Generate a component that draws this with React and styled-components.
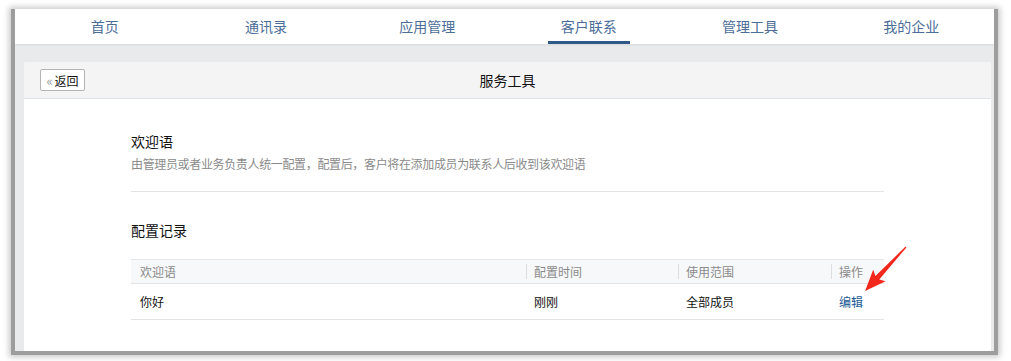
import React from 'react';
import styled, { createGlobalStyle } from 'styled-components';

const GlobalStyle = createGlobalStyle`
  html, body {
    margin: 0;
    padding: 0;
    background: #fff;
  }
  body {
    font-family: "Noto Sans CJK SC", "Noto Sans", sans-serif;
  }
`;

const navItems = ['首页', '通讯录', '应用管理', '客户联系', '管理工具', '我的企业'];

const records = [{ text: '你好', time: '刚刚', scope: '全部成员' }];

export default function App() {
  return (
    <Page>
      <GlobalStyle />
      <Frame>
        <NavBar>
          {navItems.map(item => (
            <NavItem key={item} active={item === '客户联系'}>
              <span>{item}</span>
            </NavItem>
          ))}
        </NavBar>
        <Main>
          <Card>
            <CardHeader>
              <BackButton>
                <span className="arrows">«</span>返回
              </BackButton>
              <CardTitle>服务工具</CardTitle>
            </CardHeader>
            <CardBody>
              <SectionTitle>欢迎语</SectionTitle>
              <Desc>由管理员或者业务负责人统一配置，配置后，客户将在添加成员为联系人后收到该欢迎语</Desc>
              <Divider />
              <SectionTitle gap={28}>配置记录</SectionTitle>
              <Table>
                <HeadRow>
                  <HeadCell>欢迎语</HeadCell>
                  <HeadCell sep>配置时间</HeadCell>
                  <HeadCell sep>使用范围</HeadCell>
                  <HeadCell sep>操作</HeadCell>
                </HeadRow>
                {records.map(r => (
                  <BodyRow key={r.text}>
                    <Cell>{r.text}</Cell>
                    <Cell>{r.time}</Cell>
                    <Cell>{r.scope}</Cell>
                    <Cell>
                      <EditLink>编辑</EditLink>
                    </Cell>
                  </BodyRow>
                ))}
              </Table>
            </CardBody>
          </Card>
        </Main>
      </Frame>
      <Arrow width="90" height="80" viewBox="0 0 90 80">
        <path
          transform="translate(66,17) rotate(133)"
          d="M0,-0.6 L42,-2.6 L39,-8.5 L60,0 L39,8.5 L42,2.6 L0,0.6 Z"
          fill="#f2281c"
        />
      </Arrow>
    </Page>
  );
}

const Page = styled.div`
  position: relative;
  width: 1011px;
  height: 361px;
  overflow: hidden;
  background: #fff;
  padding-top: 9px;
  box-sizing: border-box;
`;

const Frame = styled.div`
  margin-left: 11px;
  width: 979px;
  height: 342px;
  border: 4px solid #9d9d9d;
  border-top: none;
  box-shadow: 0 0 6px 2px rgba(0, 0, 0, 0.22);
  background: #e9eaec;
  overflow: hidden;
  display: flex;
  flex-direction: column;
`;

const NavBar = styled.div`
  height: 35px;
  flex: none;
  background: #fff;
  display: grid;
  grid-template-columns: repeat(6, 1fr);
  padding: 0 2px 0 9px;
  box-shadow: 0 1px 2px rgba(0, 0, 0, 0.08);
  position: relative;
  z-index: 1;
`;

const NavItem = styled.div`
  display: flex;
  justify-content: center;
  span {
    height: 35px;
    box-sizing: border-box;
    padding: 2px 13px 0;
    line-height: 30px;
    font-size: 14px;
    color: #4b6d98;
    border-bottom: 3px solid ${p => (p.active ? '#2f5a88' : 'transparent')};
  }
`;

const Main = styled.div`
  flex: 1;
  padding: 18px 3px 0 9px;
`;

const Card = styled.div`
  background: #fff;
  border-radius: 3px 3px 0 0;
  height: 400px;
`;

const CardHeader = styled.div`
  position: relative;
  height: 36px;
  background: #f4f4f5;
  border-bottom: 1px solid #dce2e8;
  border-radius: 3px 3px 0 0;
  display: flex;
  align-items: center;
  justify-content: center;
`;

const BackButton = styled.div`
  position: absolute;
  left: 16px;
  top: 7px;
  width: 45px;
  height: 22px;
  box-sizing: border-box;
  border: 1px solid #b4b4b4;
  border-radius: 2px;
  background: #fff;
  font-size: 12px;
  color: #111;
  display: flex;
  align-items: center;
  justify-content: center;
  .arrows {
    color: #a0a0a0;
    font-size: 13px;
    margin-right: 2px;
  }
`;

const CardTitle = styled.div`
  font-size: 14px;
  color: #111;
`;

const CardBody = styled.div`
  padding: 32px 107px 0;
`;

const SectionTitle = styled.div`
  margin-top: ${p => p.gap || 0}px;
  font-size: 14px;
  line-height: 20px;
  color: #111;
`;

const Desc = styled.div`
  margin-top: 4px;
  font-size: 12px;
  line-height: 18px;
  letter-spacing: -0.35px;
  color: #8a8a8a;
`;

const Divider = styled.div`
  margin-top: 18px;
  height: 1px;
  background: #e4e4e4;
`;

const Table = styled.div`
  margin-top: 19px;
  border-top: 1px solid #e6e6e6;
`;

const columns = '395px 152px 153px 1fr';

const HeadRow = styled.div`
  display: grid;
  grid-template-columns: ${columns};
  height: 23px;
  background: #f7f8fa;
  border-bottom: 1px solid #e4e4e4;
`;

const HeadCell = styled.div`
  position: relative;
  display: flex;
  align-items: center;
  padding-left: ${p => (p.sep ? 8 : 9)}px;
  font-size: 12px;
  color: #8a8a8a;
  &::before {
    content: '';
    display: ${p => (p.sep ? 'block' : 'none')};
    position: absolute;
    left: 0;
    top: 4px;
    bottom: 4px;
    width: 1px;
    background: #dedede;
  }
`;

const BodyRow = styled.div`
  display: grid;
  grid-template-columns: ${columns};
  height: 35px;
  border-bottom: 1px solid #e4e4e4;
  & > div:first-child {
    padding-left: 9px;
  }
`;

const Cell = styled.div`
  display: flex;
  align-items: center;
  padding-left: 8px;
  font-size: 12px;
  color: #111;
`;

const EditLink = styled.span`
  color: #225a95;
  cursor: pointer;
`;

const Arrow = styled.svg`
  position: absolute;
  left: 840px;
  top: 230px;
`;
